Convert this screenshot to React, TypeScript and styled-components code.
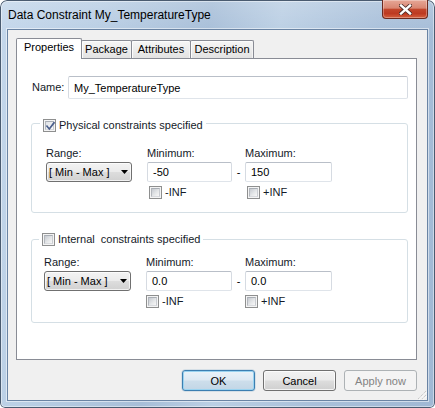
import React from 'react';
import styled, { createGlobalStyle } from 'styled-components';

const Global = createGlobalStyle`
  html, body { margin: 0; padding: 0; background: #ffffff; }
  body { width: 435px; height: 408px; overflow: hidden; font-family: "Liberation Sans", Arial, sans-serif; }
  * { box-sizing: border-box; }
`;

const Window = styled.div`
  width: 435px;
  height: 408px;
  display: flex;
  flex-direction: column;
  padding: 0 8px 8px 8px;
  border-radius: 7px 7px 5px 5px;
  background:
    linear-gradient(180deg, rgba(255,255,255,0.18), rgba(255,255,255,0) 34px),
    linear-gradient(100deg, #c4d7eb 0%, #b9cee4 20%, #a7bed8 42%, #bbcfe4 56%, #a9c0da 76%, #a0b8d4 100%);
  box-shadow: inset 0 0 0 1px #4a5b70, inset 0 0 0 2px rgba(255,255,255,0.45);
`;

const TitleBar = styled.div`
  height: 30px;
  display: flex;
  align-items: flex-start;
  flex: none;
`;

const Title = styled.div`
  margin-top: 8px;
  font-size: 12px;
  line-height: 15px;
  color: #000;
  white-space: nowrap;
`;

const CloseButton = styled.div`
  margin-left: auto;
  margin-right: -1px;
  width: 46px;
  height: 19px;
  display: flex;
  align-items: center;
  justify-content: center;
  border: 1px solid #6b2a20;
  border-top: none;
  border-radius: 0 0 4px 4px;
  background: linear-gradient(180deg, #e6a797 0%, #d98672 45%, #c2462c 52%, #bd3a22 75%, #d5603f 100%);
  box-shadow: inset 0 0 0 1px rgba(255,255,255,0.3);
`;

const Client = styled.div`
  position: relative;
  flex: 1;
  display: flex;
  flex-direction: column;
  background: #f0f0f0;
  padding: 8px 10px 9px 8px;
  box-shadow: 0 0 0 1px #6a84a4, 0 0 0 2px rgba(255,255,255,0.5);
`;

const TabStrip = styled.div`
  height: 20px;
  display: flex;
  align-items: flex-end;
  flex: none;
`;

const Tab = styled.div<{ $w: number; $active?: boolean }>`
  position: relative;
  z-index: ${p => (p.$active ? 2 : 1)};
  width: ${p => p.$w}px;
  height: ${p => (p.$active ? 21 : 18)}px;
  margin-right: -1px;
  margin-bottom: ${p => (p.$active ? -1 : 0)}px;
  border: 1px solid #898c95;
  border-bottom: none;
  border-radius: 2px 2px 0 0;
  background: ${p => (p.$active ? '#ffffff' : 'linear-gradient(180deg, #f6f6f6 0%, #ececec 50%, #e2e2e2 100%)')};
  box-shadow: ${p => (p.$active ? 'none' : 'inset 1px 1px 0 #fcfcfc, inset -1px 0 0 #f4f4f4')};
  display: flex;
  justify-content: center;
  align-items: flex-start;
  padding-top: 2px;
  font-size: 11px;
  line-height: 13px;
  color: #000;
  white-space: nowrap;
`;

const Panel = styled.div`
  flex: 1;
  display: flex;
  flex-direction: column;
  background: #ffffff;
  border: 1px solid #898c95;
  padding: 17px 8px 0 14px;
`;

const NameRow = styled.div`
  display: flex;
  align-items: center;
  padding-left: 1px;
`;

const Label = styled.div`
  font-size: 11px;
  line-height: 13px;
  color: #141a28;
  white-space: nowrap;
`;

const NameLabel = styled(Label)`
  width: 36px;
  flex: none;
`;

const TextBox = styled.div<{ $h: number }>`
  height: ${p => p.$h}px;
  display: flex;
  align-items: center;
  padding-left: 5px;
  border: 1px solid;
  border-color: #b9bfc8 #d6dbe2 #dfe4ea #d6dbe2;
  border-radius: 2px;
  background: #ffffff;
  font-size: 11px;
  color: #000;
  white-space: nowrap;
`;

const NameBox = styled(TextBox)`
  flex: 1;
`;

const Group = styled.div<{ $top: number; $bottom: number }>`
  margin-top: ${p => p.$top}px;
  display: flex;
  flex-direction: column;
  border: 1px solid #d5dfe5;
  border-radius: 3px;
  padding-bottom: ${p => p.$bottom}px;
`;

const Legend = styled.div<{ $lift: number; $x: number }>`
  align-self: flex-start;
  margin: ${p => -p.$lift}px 0 0 ${p => p.$x}px;
  padding: 0 3px;
  height: 14px;
  display: flex;
  align-items: center;
  gap: 3px;
  background: #ffffff;
  font-size: 11px;
  line-height: 13px;
  color: #141a28;
  white-space: nowrap;
`;

const Fields = styled.div<{ $top: number; $x: number; $cols: string }>`
  margin: ${p => p.$top}px 0 0 ${p => p.$x}px;
  display: grid;
  grid-template-columns: ${p => p.$cols};
  grid-template-rows: 13px 20px 15px;
  row-gap: 2px;
`;

const Combo = styled.div`
  height: 20px;
  display: flex;
  align-items: center;
  justify-content: space-between;
  padding: 0 3px 0 2px;
  border: 1px solid #707070;
  border-radius: 3px;
  background: linear-gradient(180deg, #f3f3f3 0%, #ebebeb 48%, #dddddd 52%, #d1d1d1 100%);
  box-shadow: inset 0 0 0 1px rgba(255,255,255,0.7);
  font-size: 11px;
  color: #000;
  white-space: nowrap;
`;

const Dash = styled.div`
  display: flex;
  align-items: center;
  justify-content: center;
  font-size: 11px;
  color: #000;
`;

const CheckRow = styled.div<{ $x: number }>`
  display: flex;
  align-items: flex-end;
  gap: 3px;
  padding-left: ${p => p.$x}px;
  font-size: 11px;
  line-height: 13px;
  color: #141a28;
  white-space: nowrap;
`;

const CheckOuter = styled.span`
  position: relative;
  flex: none;
  width: 13px;
  height: 13px;
  display: flex;
  align-items: center;
  justify-content: center;
  border: 1px solid #8e8f8f;
  background: #f4f4f4;
`;

const CheckInner = styled.span<{ $checked?: boolean }>`
  width: 9px;
  height: 9px;
  border: 1px solid;
  border-color: #a9aeb5 #c9ccd1 #d8dade #b3b7bd;
  background: ${p => (p.$checked ? 'linear-gradient(135deg, #dfe2e6, #fbfbfb)' : 'linear-gradient(135deg, #c6cad0 0%, #e4e6e8 55%, #f7f7f7 100%)')};
`;

const CheckMark = styled.svg`
  position: absolute;
  left: 1px;
  top: 1px;
`;

const Footer = styled.div`
  margin-top: 10px;
  display: flex;
  justify-content: flex-end;
  gap: 8px;
  flex: none;
`;

const Button = styled.div<{ $kind: 'default' | 'normal' | 'disabled' }>`
  width: 73px;
  height: 21px;
  display: flex;
  align-items: center;
  justify-content: center;
  border-radius: 3px;
  font-size: 11px;
  border: 1px solid ${p => (p.$kind === 'default' ? '#3c7fb1' : p.$kind === 'normal' ? '#707070' : '#adb2b5')};
  color: ${p => (p.$kind === 'disabled' ? '#838383' : '#000')};
  background: ${p =>
    p.$kind === 'default'
      ? 'linear-gradient(180deg, #eaf3f9 0%, #dde9f3 48%, #cddeeb 52%, #c2d6e6 100%)'
      : p.$kind === 'normal'
      ? 'linear-gradient(180deg, #f2f2f2 0%, #ebebeb 48%, #dddddd 52%, #cfcfcf 100%)'
      : '#f4f4f4'};
  box-shadow: ${p =>
    p.$kind === 'default'
      ? 'inset 0 0 0 1px #9ad3f0, 0 0 0 0.5px rgba(60,127,177,0.3)'
      : p.$kind === 'normal'
      ? 'inset 0 0 0 1px rgba(255,255,255,0.75)'
      : 'none'};
`;

const Grip = styled.svg`
  position: absolute;
  right: 0;
  bottom: 0;
`;

const CheckBox = ({ checked }: { checked?: boolean }) => (
  <CheckOuter>
    <CheckInner $checked={checked} />
    {checked && (
      <CheckMark width="11" height="11" viewBox="0 0 11 11">
        <path d="M2 5.2 L4.3 8 L9 1.8" stroke="#4b5f8c" strokeWidth="1.7" fill="none" strokeLinecap="square" />
      </CheckMark>
    )}
  </CheckOuter>
);

const Arrow = () => (
  <svg width="7" height="4" viewBox="0 0 7 4">
    <path d="M0 0 H7 L3.5 4 Z" fill="#000" />
  </svg>
);

type GroupProps = {
  title: string;
  checked?: boolean;
  min: string;
  max: string;
  top: number;
  bottom: number;
  lift: number;
  legendX: number;
  fieldsTop: number;
  fieldsX: number;
  cols: string;
  checkX: number;
};

const ConstraintGroup = (g: GroupProps) => (
  <Group $top={g.top} $bottom={g.bottom}>
    <Legend $lift={g.lift} $x={g.legendX}>
      <CheckBox checked={g.checked} />
      <span>{g.title}</span>
    </Legend>
    <Fields $top={g.fieldsTop} $x={g.fieldsX} $cols={g.cols}>
      <Label>Range:</Label>
      <span />
      <Label>Minimum:</Label>
      <span />
      <Label>Maximum:</Label>
      <Combo>
        <span>[ Min - Max ]</span>
        <Arrow />
      </Combo>
      <span />
      <TextBox $h={20}>{g.min}</TextBox>
      <Dash>-</Dash>
      <TextBox $h={20}>{g.max}</TextBox>
      <span />
      <span />
      <CheckRow $x={g.checkX}>
        <CheckBox />
        <span>-INF</span>
      </CheckRow>
      <span />
      <CheckRow $x={g.checkX}>
        <CheckBox />
        <span>+INF</span>
      </CheckRow>
    </Fields>
  </Group>
);

export default function App() {
  return (
    <>
      <Global />
      <Window>
        <TitleBar>
          <Title>Data Constraint My_TemperatureType</Title>
          <CloseButton>
            <svg width="13" height="11" viewBox="0 0 13 11">
              <path d="M2 1.5 L11 9.5 M11 1.5 L2 9.5" stroke="#4a2a26" strokeWidth="4" strokeLinecap="square" />
              <path d="M2 1.5 L11 9.5 M11 1.5 L2 9.5" stroke="#ffffff" strokeWidth="2.4" strokeLinecap="square" />
            </svg>
          </CloseButton>
        </TitleBar>
        <Client>
          <TabStrip>
            <Tab $w={66} $active>Properties</Tab>
            <Tab $w={51}>Package</Tab>
            <Tab $w={60}>Attributes</Tab>
            <Tab $w={64}>Description</Tab>
          </TabStrip>
          <Panel>
            <NameRow>
              <NameLabel>Name:</NameLabel>
              <NameBox $h={23}>My_TemperatureType</NameBox>
            </NameRow>
            <ConstraintGroup
              title="Physical constraints specified"
              checked
              min="-50"
              max="150"
              top={24}
              bottom={13}
              lift={6}
              legendX={8}
              fieldsTop={15}
              fieldsX={14}
              cols="86px 15px 85px 13px 87px"
              checkX={2}
            />
            <ConstraintGroup
              title={'Internal\u00a0 constraints specified'}
              min="0.0"
              max="0.0"
              top={26}
              bottom={14}
              lift={8}
              legendX={7}
              fieldsTop={10}
              fieldsX={12}
              cols="87px 15px 86px 13px 87px"
              checkX={0}
            />
          </Panel>
          <Footer>
            <Button $kind="default">OK</Button>
            <Button $kind="normal">Cancel</Button>
            <Button $kind="disabled">Apply now</Button>
          </Footer>
          <Grip width="12" height="12" viewBox="0 0 12 12">
            <path d="M11 3 L3 11 M11 7 L7 11" stroke="#b8b8b8" strokeWidth="1" strokeDasharray="1 1" />
            <path d="M12 4 L4 12 M12 8 L8 12" stroke="#ffffff" strokeWidth="1" strokeDasharray="1 1" />
          </Grip>
        </Client>
      </Window>
    </>
  );
}
